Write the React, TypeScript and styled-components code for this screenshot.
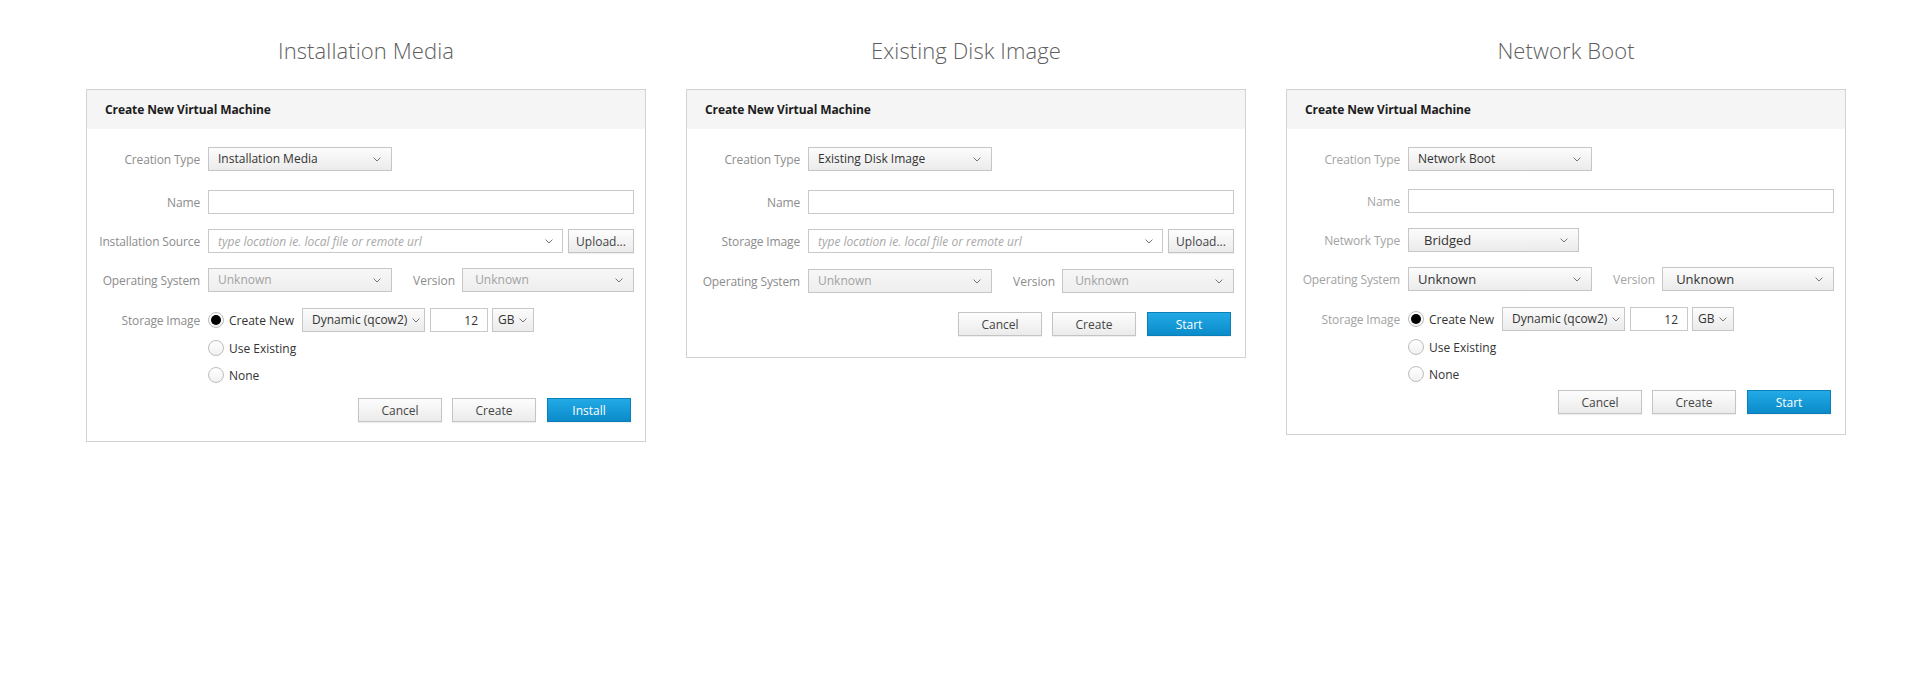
import React from "react";
import styled, { createGlobalStyle } from "styled-components";

const Global = createGlobalStyle`
  html, body { margin: 0; padding: 0; background: #ffffff; }
  body { font-family: "Open Sans", "Noto Sans", "Liberation Sans", sans-serif; }
  * { box-sizing: border-box; }
`;

const Page = styled.div`
  display: flex;
  gap: 40px;
  padding: 35px 0 0 86px;
  width: 1915px;
  height: 673px;
  align-items: flex-start;
`;

const Column = styled.section`
  width: 560px;
  display: flex;
  flex-direction: column;
`;

const Title = styled.h2`
  margin: 0 0 24px;
  height: 30px;
  line-height: 30px;
  text-align: center;
  font-size: 22px;
  font-weight: 300;
  color: #5e5e5e;
  letter-spacing: 0.1px;
`;

const Panel = styled.div`
  border: 1px solid #d2d2d2;
  background: #ffffff;
`;

const Header = styled.div`
  height: 39px;
  background: #f5f5f5;
  display: flex;
  align-items: center;
  padding-left: 18px;
  font-size: 12px;
  font-weight: 700;
  letter-spacing: -0.1px;
  color: #1c1c1c;
`;

const Body = styled.div<{ $pb: number }>`
  padding: 18px 11px ${(p) => p.$pb}px 0;
  display: flex;
  flex-direction: column;
`;

const Row = styled.div<{ $mt?: number; $h?: number }>`
  display: flex;
  align-items: center;
  margin-top: ${(p) => p.$mt ?? 0}px;
  height: ${(p) => p.$h ?? 24}px;
`;

const Label = styled.div<{ $light?: boolean }>`
  width: 113px;
  margin-right: 8px;
  text-align: right;
  font-size: 12px;
  letter-spacing: -0.15px;
  color: ${(p) => (p.$light ? "#a3a3a3" : "#8c8c8c")};
  white-space: nowrap;
`;

const InlineLabel = styled.div<{ $light?: boolean }>`
  padding: 0 7px 0 21px;
  font-size: 12px;
  color: ${(p) => (p.$light ? "#a3a3a3" : "#8c8c8c")};
  white-space: nowrap;
`;

const Select = styled.div<{
  $w?: number;
  $flex?: boolean;
  $muted?: boolean;
  $pl?: number;
  $pr?: number;
  $fs?: number;
}>`
  height: 24px;
  ${(p) => (p.$flex ? "flex: 1;" : `width: ${p.$w}px; flex: none;`)}
  display: flex;
  align-items: center;
  justify-content: space-between;
  padding: 0 ${(p) => p.$pr ?? 10}px 0 ${(p) => p.$pl ?? 9}px;
  border: 1px solid #c6c6c6;
  background: ${(p) =>
    p.$muted
      ? "linear-gradient(#f7f7f7, #eeeeee)"
      : "linear-gradient(#fcfcfc, #ebebeb)"};
  font-size: ${(p) => p.$fs ?? 12}px;
  color: ${(p) => (p.$muted ? "#a2a2a2" : "#333333")};
  white-space: nowrap;
  line-height: 1;
`;

const TextBox = styled.div<{ $flex?: boolean; $w?: number; $right?: boolean }>`
  height: 24px;
  ${(p) => (p.$flex ? "flex: 1;" : `width: ${p.$w}px; flex: none;`)}
  display: flex;
  align-items: center;
  justify-content: ${(p) => (p.$right ? "flex-end" : "space-between")};
  padding: 0 9px 0 9px;
  border: 1px solid #c9c9c9;
  background: #ffffff;
  font-size: 12px;
  color: #333333;
`;

const Placeholder = styled.span`
  font-style: italic;
  color: #a8a8a8;
  font-size: 12px;
`;

const Button = styled.div<{ $primary?: boolean; $w?: number }>`
  width: ${(p) => p.$w ?? 84}px;
  height: 24px;
  flex: none;
  display: flex;
  align-items: center;
  justify-content: center;
  font-size: 12px;
  color: ${(p) => (p.$primary ? "#ffffff" : "#444444")};
  border: 1px solid ${(p) => (p.$primary ? "#0c7fb8" : "#c4c4c4")};
  background: ${(p) =>
    p.$primary
      ? "linear-gradient(#22aae6, #0b8bca)"
      : "linear-gradient(#fdfdfd, #ebebeb)"};
  box-shadow: 0 1px 1px rgba(0, 0, 0, 0.06);
`;

const Actions = styled.div<{ $mt: number }>`
  display: flex;
  justify-content: flex-end;
  gap: 10px;
  margin-top: ${(p) => p.$mt}px;
  padding-right: 3px;
  & > :last-child { margin-left: 1px; }
`;

const Gap = styled.div<{ $w: number }>`
  width: ${(p) => p.$w}px;
  flex: none;
`;

const RadioWrap = styled.div<{ $w?: number }>`
  display: flex;
  align-items: center;
  gap: 5px;
  ${(p) => (p.$w ? `width: ${p.$w}px; flex: none;` : "")}
  font-size: 12px;
  color: #333333;
`;

const RadioCircle = styled.span<{ $on?: boolean }>`
  width: 16px;
  height: 16px;
  border-radius: 50%;
  border: 1px solid #bdbdbd;
  background: linear-gradient(#ffffff, #f1f1f1);
  display: flex;
  align-items: center;
  justify-content: center;
  flex: none;
  &::after {
    content: "";
    display: ${(p) => (p.$on ? "block" : "none")};
    width: 10px;
    height: 10px;
    border-radius: 50%;
    background: #000000;
  }
`;

const Indent = styled.div`
  width: 121px;
  flex: none;
`;

const Chevron = () => (
  <svg width="8" height="5" viewBox="0 0 8 5" style={{ flex: "none" }}>
    <polyline points="0.6,0.6 4,4 7.4,0.6" fill="none" stroke="#666666" strokeWidth="0.9" />
  </svg>
);

type Variant = "media" | "disk" | "network";

const StorageChoices: React.FC<{ light?: boolean }> = ({ light }) => (
  <>
    <Row $mt={16}>
      <Label $light={light}>Storage Image</Label>
      <RadioWrap $w={94}>
        <RadioCircle $on />
        Create New
      </RadioWrap>
      <Select $w={123} $pl={9} $pr={4}>
        Dynamic (qcow2)
        <Chevron />
      </Select>
      <Gap $w={5} />
      <TextBox $w={58} $right>
        12
      </TextBox>
      <Gap $w={4} />
      <Select $w={42} $pl={5} $pr={6}>
        GB
        <Chevron />
      </Select>
    </Row>
    <Row $mt={3} $h={26}>
      <Indent />
      <RadioWrap>
        <RadioCircle />
        Use Existing
      </RadioWrap>
    </Row>
    <Row $mt={1} $h={26}>
      <Indent />
      <RadioWrap>
        <RadioCircle />
        None
      </RadioWrap>
    </Row>
  </>
);

const Dialog: React.FC<{ variant: Variant }> = ({ variant }) => {
  const light = variant === "network";
  const muted = variant !== "network";
  const creation =
    variant === "media" ? "Installation Media" : variant === "disk" ? "Existing Disk Image" : "Network Boot";
  return (
    <Panel>
      <Header>Create New Virtual Machine</Header>
      <Body $pb={variant === "media" ? 19 : variant === "disk" ? 21 : 20}>
        <Row>
          <Label $light={light}>Creation Type</Label>
          <Select $w={184}>
            {creation}
            <Chevron />
          </Select>
        </Row>
        <Row $mt={variant === "network" ? 18 : 19}>
          <Label $light={light}>Name</Label>
          <TextBox $flex />
        </Row>
        {variant === "network" ? (
          <Row $mt={15}>
            <Label $light={light}>Network Type</Label>
            <Select $w={171} $pl={15} $fs={13}>
              Bridged
              <Chevron />
            </Select>
          </Row>
        ) : (
          <Row $mt={15}>
            <Label>{variant === "media" ? "Installation Source" : "Storage Image"}</Label>
            <TextBox $flex>
              <Placeholder>type location ie. local file or remote url</Placeholder>
              <Chevron />
            </TextBox>
            <Gap $w={5} />
            <Button $w={66}>Upload...</Button>
          </Row>
        )}
        <Row $mt={variant === "disk" ? 16 : 15}>
          <Label $light={light}>Operating System</Label>
          <Select $w={184} $muted={muted} $fs={muted ? 12 : 13}>
            Unknown
            <Chevron />
          </Select>
          <InlineLabel $light={light}>Version</InlineLabel>
          <Select $flex $muted={muted} $pl={muted ? 12 : 13} $fs={muted ? 12 : 13}>
            Unknown
            <Chevron />
          </Select>
        </Row>
        {variant !== "disk" && <StorageChoices light={light} />}
        <Actions $mt={variant === "media" ? 10 : variant === "disk" ? 19 : 3}>
          <Button>Cancel</Button>
          <Button>Create</Button>
          <Button $primary>{variant === "media" ? "Install" : "Start"}</Button>
        </Actions>
      </Body>
    </Panel>
  );
};

export default function App() {
  return (
    <>
      <Global />
      <Page>
        <Column>
          <Title>Installation Media</Title>
          <Dialog variant="media" />
        </Column>
        <Column>
          <Title>Existing Disk Image</Title>
          <Dialog variant="disk" />
        </Column>
        <Column>
          <Title>Network Boot</Title>
          <Dialog variant="network" />
        </Column>
      </Page>
    </>
  );
}
